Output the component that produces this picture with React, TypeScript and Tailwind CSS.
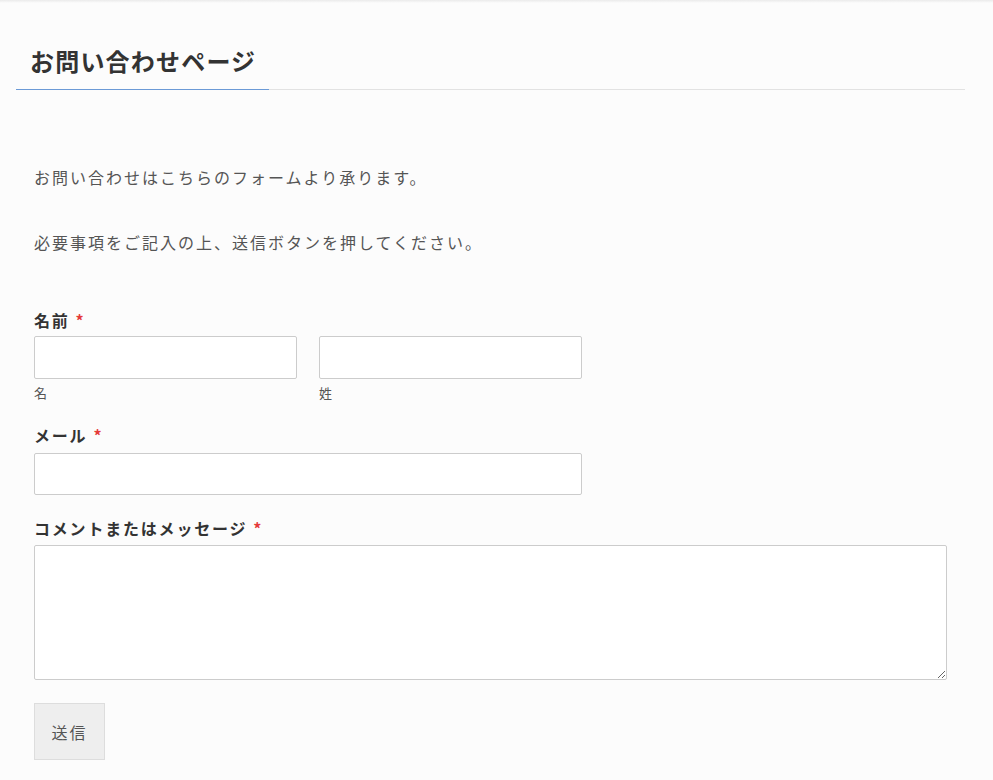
const jp = { fontFamily: '"Noto Sans CJK JP", "Noto Sans", sans-serif' };

function Required() {
  return <span className="ml-[6px] text-[#e53b3b]">*</span>;
}

export default function App() {
  return (
    <div className="min-h-[780px] bg-[#fcfcfc]" style={jp}>
      {/* faint shadow from the header above */}
      <div className="h-[3px] bg-gradient-to-b from-[#ebebeb] to-[#fcfcfc]" />

      <div className="mx-[16px] w-[949px]">
        {/* page title with blue accent underline */}
        <div className="flex border-b border-[#e2e2e2] pt-[40px]">
          <h1 className="-mb-px w-[253px] border-b border-[#6b9ad6] px-[14px] pb-[10px] text-[24px] leading-[36px] font-bold tracking-[1.2px] whitespace-nowrap text-[#333]">
            お問い合わせページ
          </h1>
        </div>

        <div className="px-[18px] text-[16px] tracking-[2px] text-[#555]">
          <p className="mt-[73px] leading-[28px]">お問い合わせはこちらのフォームより承ります。</p>
          <p className="mt-[37px] leading-[28px]">必要事項をご記入の上、送信ボタンを押してください。</p>

          <form className="mt-[52px]" onSubmit={(e) => e.preventDefault()}>
            {/* name */}
            <div>
              <label className="block text-[16px] leading-[24px] font-bold tracking-[1.8px] text-[#333]">
                名前<Required />
              </label>
              <div className="mt-[4px] flex gap-[22px]">
                <div className="w-[263px]">
                  <input className="block h-[43px] w-full rounded-[2px] border border-[#cccccc] bg-white px-2 outline-none" />
                  <div className="mt-[5px] text-[13px] leading-[18px] tracking-normal text-[#555]">名</div>
                </div>
                <div className="w-[263px]">
                  <input className="block h-[43px] w-full rounded-[2px] border border-[#cccccc] bg-white px-2 outline-none" />
                  <div className="mt-[5px] text-[13px] leading-[18px] tracking-normal text-[#555]">姓</div>
                </div>
              </div>
            </div>

            {/* email */}
            <div className="mt-[21px]">
              <label className="block text-[16px] leading-[24px] font-bold tracking-[1.8px] text-[#333]">
                メール<Required />
              </label>
              <input className="mt-[6px] block h-[42px] w-[548px] rounded-[2px] border border-[#cccccc] bg-white px-2 outline-none" />
            </div>

            {/* message */}
            <div className="mt-[21px]">
              <label className="block text-[16px] leading-[24px] font-bold tracking-[1.8px] text-[#333]">
                コメントまたはメッセージ<Required />
              </label>
              <textarea className="mt-[5px] block h-[135px] w-full rounded-[2px] border border-[#cccccc] bg-white px-2 outline-none" />
            </div>

            <button
              type="submit"
              className="mt-[23px] h-[57px] w-[71px] border border-[#dddddd] bg-[#eeeeee] text-[16px] tracking-[2px] text-[#555]"
            >
              送信
            </button>
          </form>
        </div>
      </div>
    </div>
  );
}
